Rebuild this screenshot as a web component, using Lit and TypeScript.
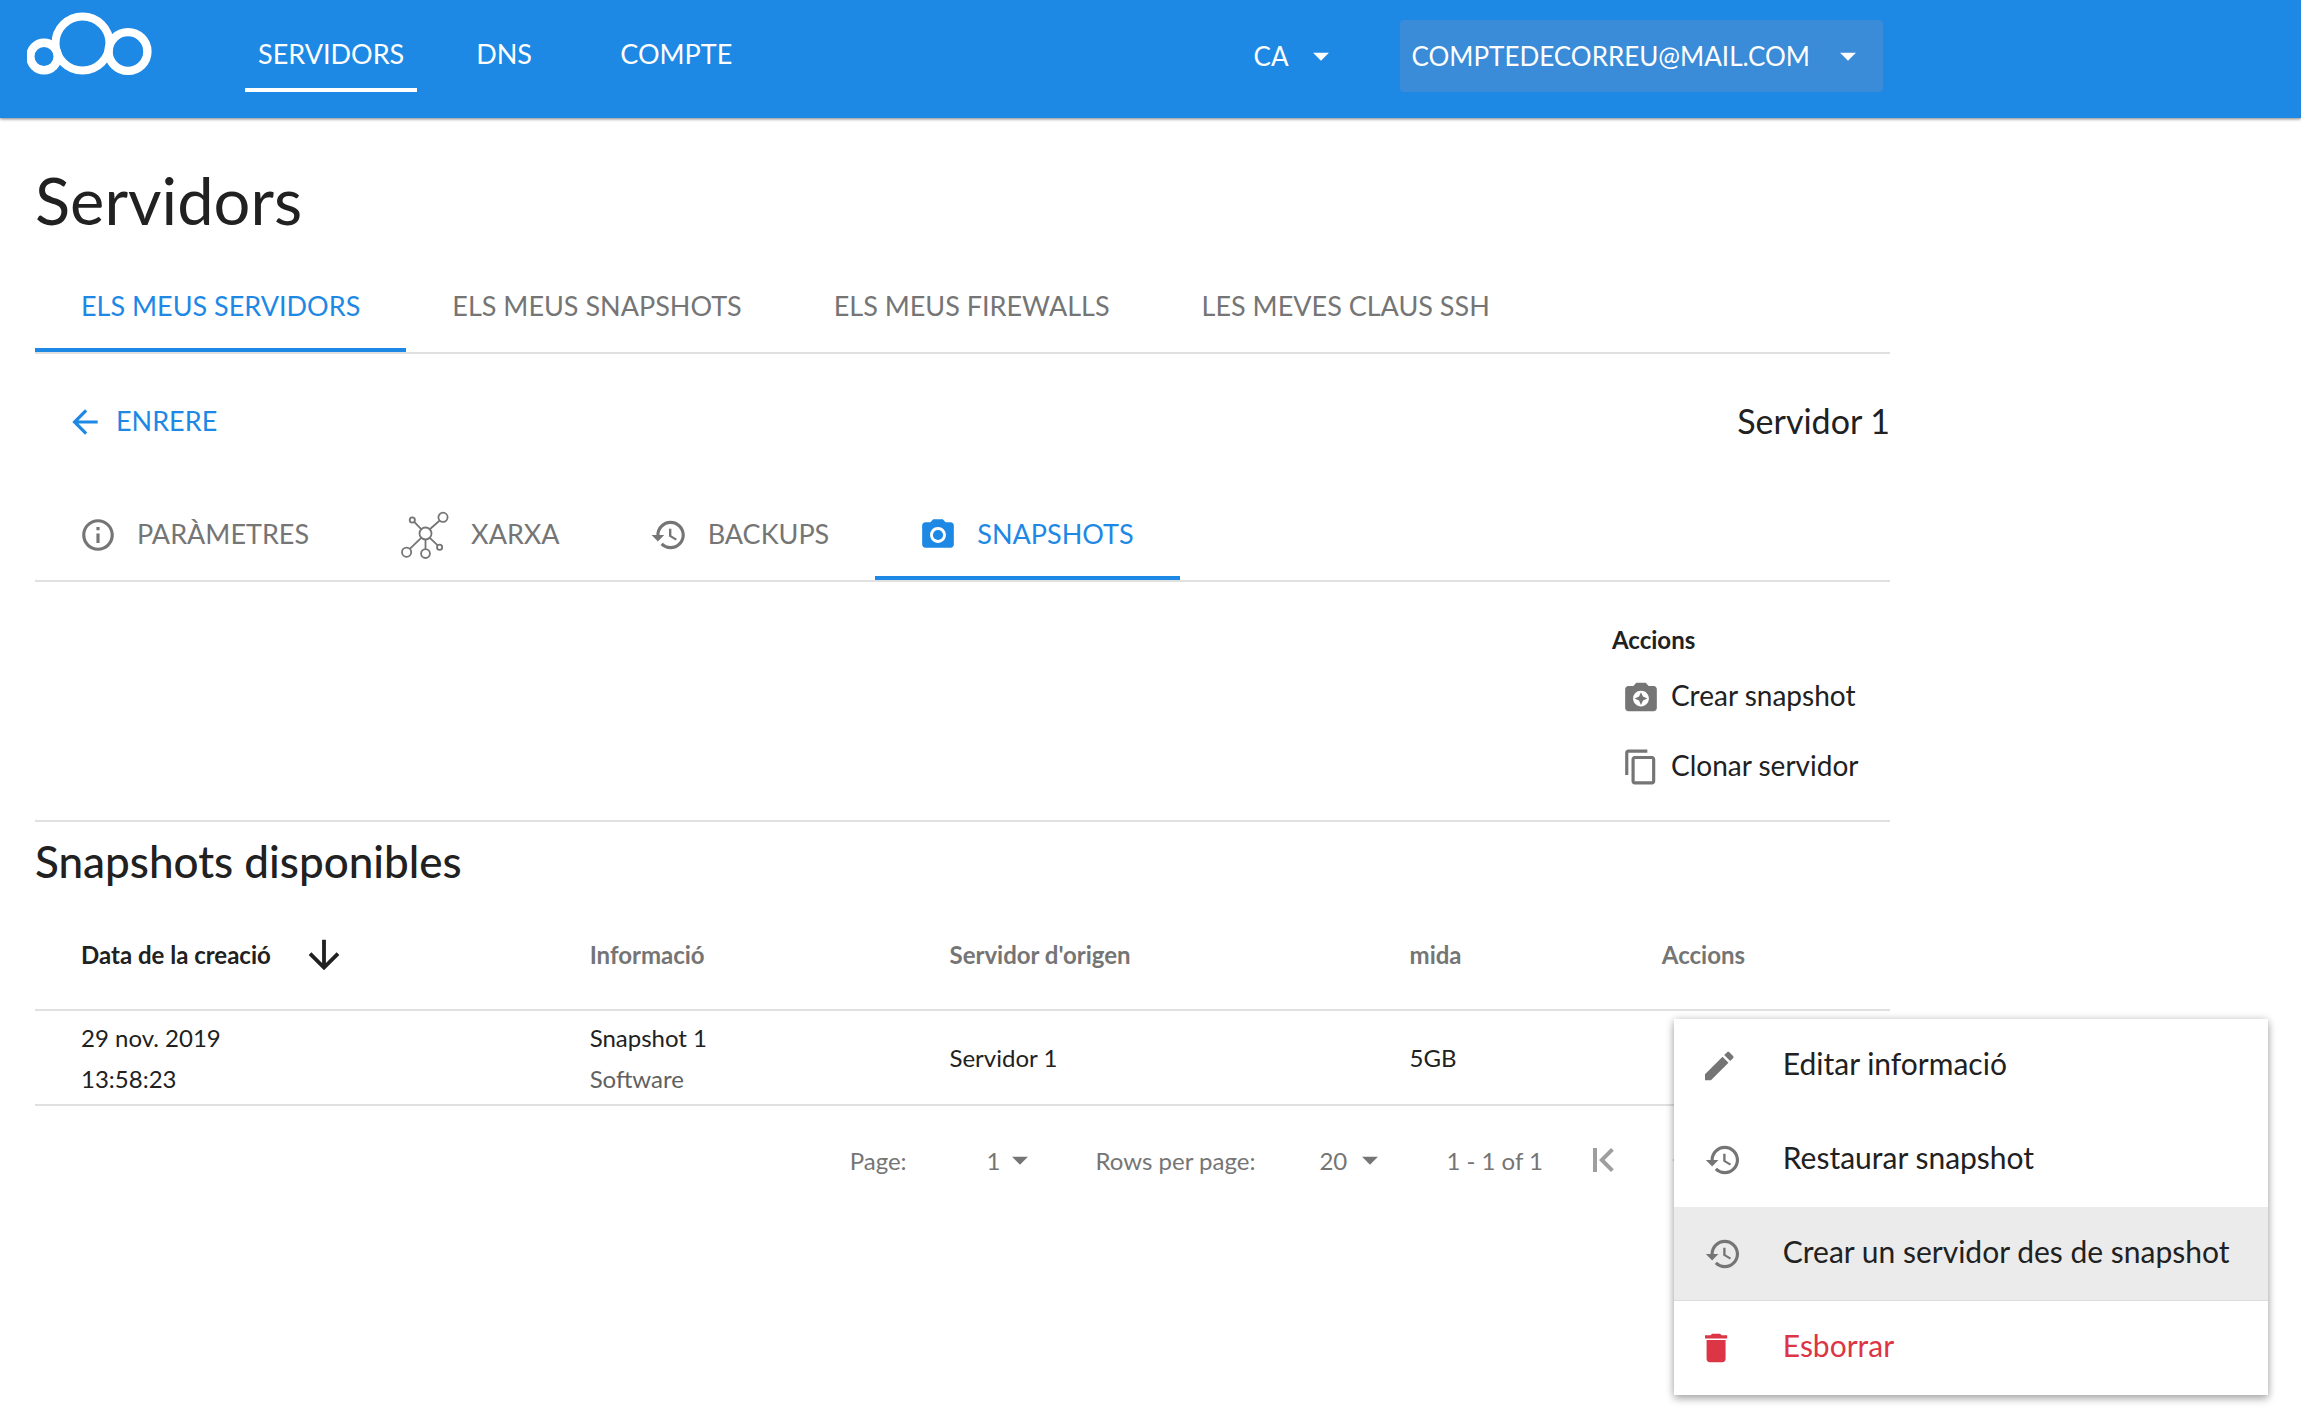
import { LitElement, html, css, svg } from "lit";
import { customElement, property } from "lit/decorators.js";
import { classMap } from "lit/directives/class-map.js";

const icons: Record<string, unknown> = {
  info: svg`<path d="M11 7h2v2h-2zm0 4h2v6h-2zm1-9C6.48 2 2 6.48 2 12s4.48 10 10 10 10-4.48 10-10S17.52 2 12 2zm0 18c-4.41 0-8-3.59-8-8s3.59-8 8-8 8 3.59 8 8-3.59 8-8 8z"/>`,
  history: svg`<path d="M13 3c-4.97 0-9 4.03-9 9H1l3.89 3.89.07.14L9 12H6c0-3.87 3.13-7 7-7s7 3.13 7 7-3.13 7-7 7c-1.93 0-3.68-.79-4.94-2.06l-1.42 1.42C8.27 19.99 10.51 21 13 21c4.97 0 9-4.03 9-9s-4.03-9-9-9zm-1 5v5l4.28 2.54.72-1.21-3.5-2.08V8H12z"/>`,
  camera: svg`<circle cx="12" cy="12" r="3.2"/><path d="M9 2L7.17 4H4c-1.1 0-2 .9-2 2v12c0 1.1.9 2 2 2h16c1.1 0 2-.9 2-2V6c0-1.1-.9-2-2-2h-3.17L15 2H9zm3 15c-2.76 0-5-2.24-5-5s2.24-5 5-5 5 2.24 5 5-2.24 5-5 5z"/>`,
  enhance: svg`<path d="M9 3L7.17 5H4c-1.1 0-2 .9-2 2v12c0 1.1.9 2 2 2h16c1.1 0 2-.9 2-2V7c0-1.1-.9-2-2-2h-3.17L15 3H9zm3 15c-2.76 0-5-2.24-5-5s2.24-5 5-5 5 2.24 5 5-2.24 5-5 5z"/><path d="M12 17l1.25-2.75L16 13l-2.75-1.25L12 9l-1.25 2.75L8 13l2.75 1.25z"/>`,
  copy: svg`<path d="M16 1H4c-1.1 0-2 .9-2 2v14h2V3h12V1zm3 4H8c-1.1 0-2 .9-2 2v14c0 1.1.9 2 2 2h11c1.1 0 2-.9 2-2V7c0-1.1-.9-2-2-2zm0 16H8V7h11v14z"/>`,
  edit: svg`<path d="M3 17.25V21h3.75L17.81 9.94l-3.75-3.75L3 17.25zM20.71 7.04c.39-.39.39-1.02 0-1.41l-2.34-2.34c-.39-.39-1.02-.39-1.41 0l-1.83 1.83 3.75 3.75 1.83-1.83z"/>`,
  trash: svg`<path d="M6 19c0 1.1.9 2 2 2h8c1.1 0 2-.9 2-2V7H6v12zM19 4h-3.5l-1-1h-5l-1 1H5v2h14V4z"/>`,
  back: svg`<path d="M20 11H7.83l5.59-5.59L12 4l-8 8 8 8 1.41-1.41L7.83 13H20v-2z"/>`,
  down: svg`<path d="M20 12l-1.41-1.41L13 16.17V4h-2v12.17l-5.58-5.59L4 12l8 8 8-8z"/>`,
  caret: svg`<path d="M7 10l5 5 5-5z"/>`,
  first: svg`<path d="M16.41 16.59L11.82 12l4.59-4.59L15 6l-6 6 6 6zM6 6h2v12H6z"/>`,
  prev: svg`<path d="M15.41 7.41L14 6l-6 6 6 6 1.41-1.41L10.83 12z"/>`,
};

/* Left edge of the ink, for icons that line up along their own left side. */
const inkLeft: Record<string, number> = { edit: 3, history: 0.5, trash: 5 };

@customElement("ui-icon")
class UiIcon extends LitElement {
  @property() name = "info";
  @property({ type: Boolean }) flush = false;
  static styles = css`
    :host { display: block; flex: none; width: 38px; height: 38px; }
    .glyph { display: block; width: 100%; height: 100%; fill: currentColor; }
    .lines { fill: none; stroke: currentColor; stroke-width: 1.8; }
  `;
  render() {
    if (this.name === "network") {
      return html`<svg class="glyph lines" viewBox="0 0 48 48" aria-hidden="true">
        <circle cx="24.5" cy="22.5" r="6"/>
        <circle cx="11.3" cy="9" r="2.6"/>
        <circle cx="42" cy="6.3" r="4.6"/>
        <circle cx="5.6" cy="41.2" r="4.6"/>
        <circle cx="24.5" cy="42.6" r="4.4"/>
        <circle cx="38.6" cy="36.2" r="2.6"/>
        <path d="M13.2 10.9L20.2 18.2M28.8 18.2L38.7 9.5M20.2 26.8L8.8 37.9M24.5 28.5V38.2M28.8 26.8L36.7 34.3"/>
      </svg>`;
    }
    const left = this.flush ? inkLeft[this.name] ?? 0 : 0;
    return html`<svg class="glyph" viewBox="${left} 0 24 24" aria-hidden="true">${icons[this.name]}</svg>`;
  }
}

const reset = css`
  * { box-sizing: border-box; }
  a { color: inherit; text-decoration: none; }
  button, select { font: inherit; color: inherit; background: none; border: 0; padding: 0; margin: 0; text-align: left; cursor: pointer; }
  select { appearance: none; }
`;

@customElement("snapshot-menu")
class SnapshotMenu extends LitElement {
  static styles = [reset, css`
    :host { display: block; background: #fff; color: #212121; box-shadow: 0 4px 8px rgba(0,0,0,.28), 0 0 8px rgba(0,0,0,.16); }
    .item { display: flex; align-items: center; width: 100%; height: 94px; padding: 0 31px; font-size: 30px; line-height: 36px; white-space: nowrap; }
    .icon { color: #757575; margin-right: 40px; }
    .label { padding-bottom: 6px; }
    .hover { background: #ebebeb; border-bottom: 1px solid #dcdcdc; }
    .danger, .danger .icon { color: #dc3545; }
  `];
  render() {
    const items = [
      { icon: "edit", label: "Editar informació" },
      { icon: "history", label: "Restaurar snapshot" },
      { icon: "history", label: "Crear un servidor des de snapshot", hover: true },
      { icon: "trash", label: "Esborrar", danger: true },
    ];
    return items.map((i) => html`
      <button class=${classMap({ item: true, hover: !!i.hover, danger: !!i.danger })}>
        <ui-icon class="icon" name=${i.icon} flush></ui-icon><span class="label">${i.label}</span>
      </button>`);
  }
}

@customElement("app-root")
class AppRoot extends LitElement {
  static styles = [reset, css`
    :host { display: block; min-height: 100vh; background: #fff; color: #212121; font-family: Lato, "Open Sans", sans-serif; font-size: 24px; line-height: 41px; overflow-x: clip; }
    .bar { background: #1e88e5; color: #fff; box-shadow: 0 1px 3px rgba(0,0,0,.5); font-size: 26px; }
    .bar-in { display: flex; align-items: flex-start; max-width: 1919px; height: 118px; padding: 12px 36px 0 27px; }
    .logo { flex: none; width: 126px; height: 64px; fill: none; stroke: #fff; display: block; }
    .nav { display: flex; gap: 46px; margin-left: 92px; font-size: 27px; }
    .nav-link { height: 80px; padding: 20px 13px 0; line-height: 44px; border-bottom: 4px solid transparent; min-width: 98px; }
    .nav-link.on { border-color: #fff; }
    .lang { display: flex; align-items: center; gap: 13px; margin: 8px 60px 0 auto; height: 72px; }
    .account { display: flex; align-items: center; gap: 19px; height: 72px; margin-top: 8px; padding: 0 16px 0 12px; border-radius: 4px; background: #3a8bd8; }
    .page { max-width: 1926px; padding: 50px 36px 0 35px; }
    .title { margin: 0 0 26px; font-size: 65px; line-height: 64px; font-weight: 400; }
    .tabs { display: flex; border-bottom: 2px solid #e0e0e0; color: #757575; font-size: 27px; }
    .tab { display: flex; align-items: center; height: 94px; padding: 4px 46px 0; border-bottom: 4px solid transparent; white-space: nowrap; }
    .tab.on { color: #1e88e5; border-color: #1e88e5; }
    .tab-icon { margin: 3px 20px 0 -2px; }
    .tab-icon.big { width: 48px; height: 48px; margin: 3px 22px 0 0; }
    .subhead { display: flex; align-items: center; justify-content: space-between; height: 132px; }
    .back { display: flex; align-items: center; gap: 12px; margin-left: 31px; color: #1e88e5; font-size: 27px; }
    .back-icon { margin-top: 3px; }
    .server { margin: 0; font-size: 34px; font-weight: 400; }
    .actions { display: flex; justify-content: flex-end; padding: 38px 0 20px; border-bottom: 2px solid #e0e0e0; }
    .actions-in { width: 278px; }
    .actions-title { margin: 0; font-size: 24px; line-height: 40px; font-weight: 700; }
    .action { display: flex; align-items: center; gap: 11px; height: 70px; padding-left: 10px; font-size: 28px; white-space: nowrap; }
    .action-icon { color: #757575; margin-top: 3px; }
    .heading { margin: 0; font-size: 44px; line-height: 78px; font-weight: 500; }
    .table { width: 100%; border-collapse: collapse; table-layout: fixed; }
    .table th { height: 110px; padding: 0; text-align: left; font-size: 24px; font-weight: 700; color: #757575; border-bottom: 2px solid #e0e0e0; }
    .table td { height: 95px; padding: 0; border-bottom: 2px solid #e0e0e0; }
    .table .first { width: 29.9%; padding-left: 46px; }
    .table .c2 { width: 19.4%; }
    .table .c3 { width: 24.8%; }
    .table .c4 { width: 13.6%; }
    .sort { display: flex; align-items: center; gap: 30px; font-weight: 700; color: #212121; }
    .sort-icon { width: 46px; height: 46px; }
    .soft { color: #616161; }
    .menu-cell { position: relative; }
    .menu { position: absolute; z-index: 2; top: 8px; left: 12px; width: 594px; }
    .pager { display: flex; align-items: center; justify-content: flex-end; height: 108px; color: #757575; padding-right: 185px; }
    .pick { display: flex; align-items: center; }
    .pick.page-no { margin: 0 57px 0 80px; }
    .pick.rows { gap: 4px; margin: 0 57px 0 64px; }
    .pick ui-icon, .lang ui-icon { pointer-events: none; }
    .step { color: #9e9e9e; }
    .step-icon { width: 48px; height: 48px; }
    .step.start { margin: 0 28px 0 38px; }
  `];

  private tab(label: string, on = false, icon = "") {
    return html`<a href="#" class=${classMap({ tab: true, on })} aria-current=${on ? "page" : "false"}>
      ${icon ? html`<ui-icon class=${classMap({ "tab-icon": true, big: icon === "network" })} name=${icon}></ui-icon>` : ""}${label}</a>`;
  }

  render() {
    return html`
      <header class="bar">
        <div class="bar-in">
          <svg class="logo" viewBox="0 0 126 64" aria-hidden="true">
            <circle cx="17" cy="44.5" r="13.7" stroke-width="8.4"/>
            <circle cx="55.5" cy="31.5" r="27" stroke-width="8"/>
            <circle cx="101" cy="39.5" r="19.4" stroke-width="8.4"/>
          </svg>
          <nav class="nav">
            <a href="#" class="nav-link on">SERVIDORS</a>
            <a href="#" class="nav-link">DNS</a>
            <a href="#" class="nav-link">COMPTE</a>
          </nav>
          <label class="lang"><select aria-label="CA"><option>CA</option></select><ui-icon name="caret"></ui-icon></label>
          <button class="account" aria-haspopup="menu">COMPTEDECORREU@MAIL.COM<ui-icon name="caret"></ui-icon></button>
        </div>
      </header>
      <main class="page">
        <h1 class="title">Servidors</h1>
        <nav class="tabs">
          ${this.tab("ELS MEUS SERVIDORS", true)}
          ${this.tab("ELS MEUS SNAPSHOTS")}
          ${this.tab("ELS MEUS FIREWALLS")}
          ${this.tab("LES MEVES CLAUS SSH")}
        </nav>
        <div class="subhead">
          <a href="#" class="back"><ui-icon class="back-icon" name="back"></ui-icon>ENRERE</a>
          <h2 class="server">Servidor 1</h2>
        </div>
        <nav class="tabs">
          ${this.tab("PARÀMETRES", false, "info")}
          ${this.tab("XARXA", false, "network")}
          ${this.tab("BACKUPS", false, "history")}
          ${this.tab("SNAPSHOTS", true, "camera")}
        </nav>
        <section class="actions">
          <div class="actions-in">
            <h3 class="actions-title">Accions</h3>
            <button class="action"><ui-icon class="action-icon" name="enhance"></ui-icon>Crear snapshot</button>
            <button class="action"><ui-icon class="action-icon" name="copy"></ui-icon>Clonar servidor</button>
          </div>
        </section>
        <h2 class="heading">Snapshots disponibles</h2>
        <table class="table">
          <thead>
            <tr>
              <th class="first" aria-sort="descending"><button class="sort">Data de la creació<ui-icon class="sort-icon" name="down"></ui-icon></button></th>
              <th class="c2">Informació</th>
              <th class="c3">Servidor d'origen</th>
              <th class="c4">mida</th>
              <th>Accions</th>
            </tr>
          </thead>
          <tbody>
            <tr>
              <td class="first">29 nov. 2019<br>13:58:23</td>
              <td>Snapshot 1<br><span class="soft">Software</span></td>
              <td>Servidor 1</td>
              <td>5GB</td>
              <td class="menu-cell"><snapshot-menu class="menu"></snapshot-menu></td>
            </tr>
          </tbody>
        </table>
        <div class="pager">
          <label for="page">Page:</label>
          <span class="pick page-no"><select id="page"><option>1</option></select><ui-icon name="caret"></ui-icon></span>
          <label for="rows">Rows per page:</label>
          <span class="pick rows"><select id="rows"><option>20</option></select><ui-icon name="caret"></ui-icon></span>
          <span>1 - 1 of 1</span>
          <button class="step start"><ui-icon class="step-icon" name="first"></ui-icon></button>
          <button class="step"><ui-icon class="step-icon" name="prev"></ui-icon></button>
        </div>
      </main>`;
  }
}
